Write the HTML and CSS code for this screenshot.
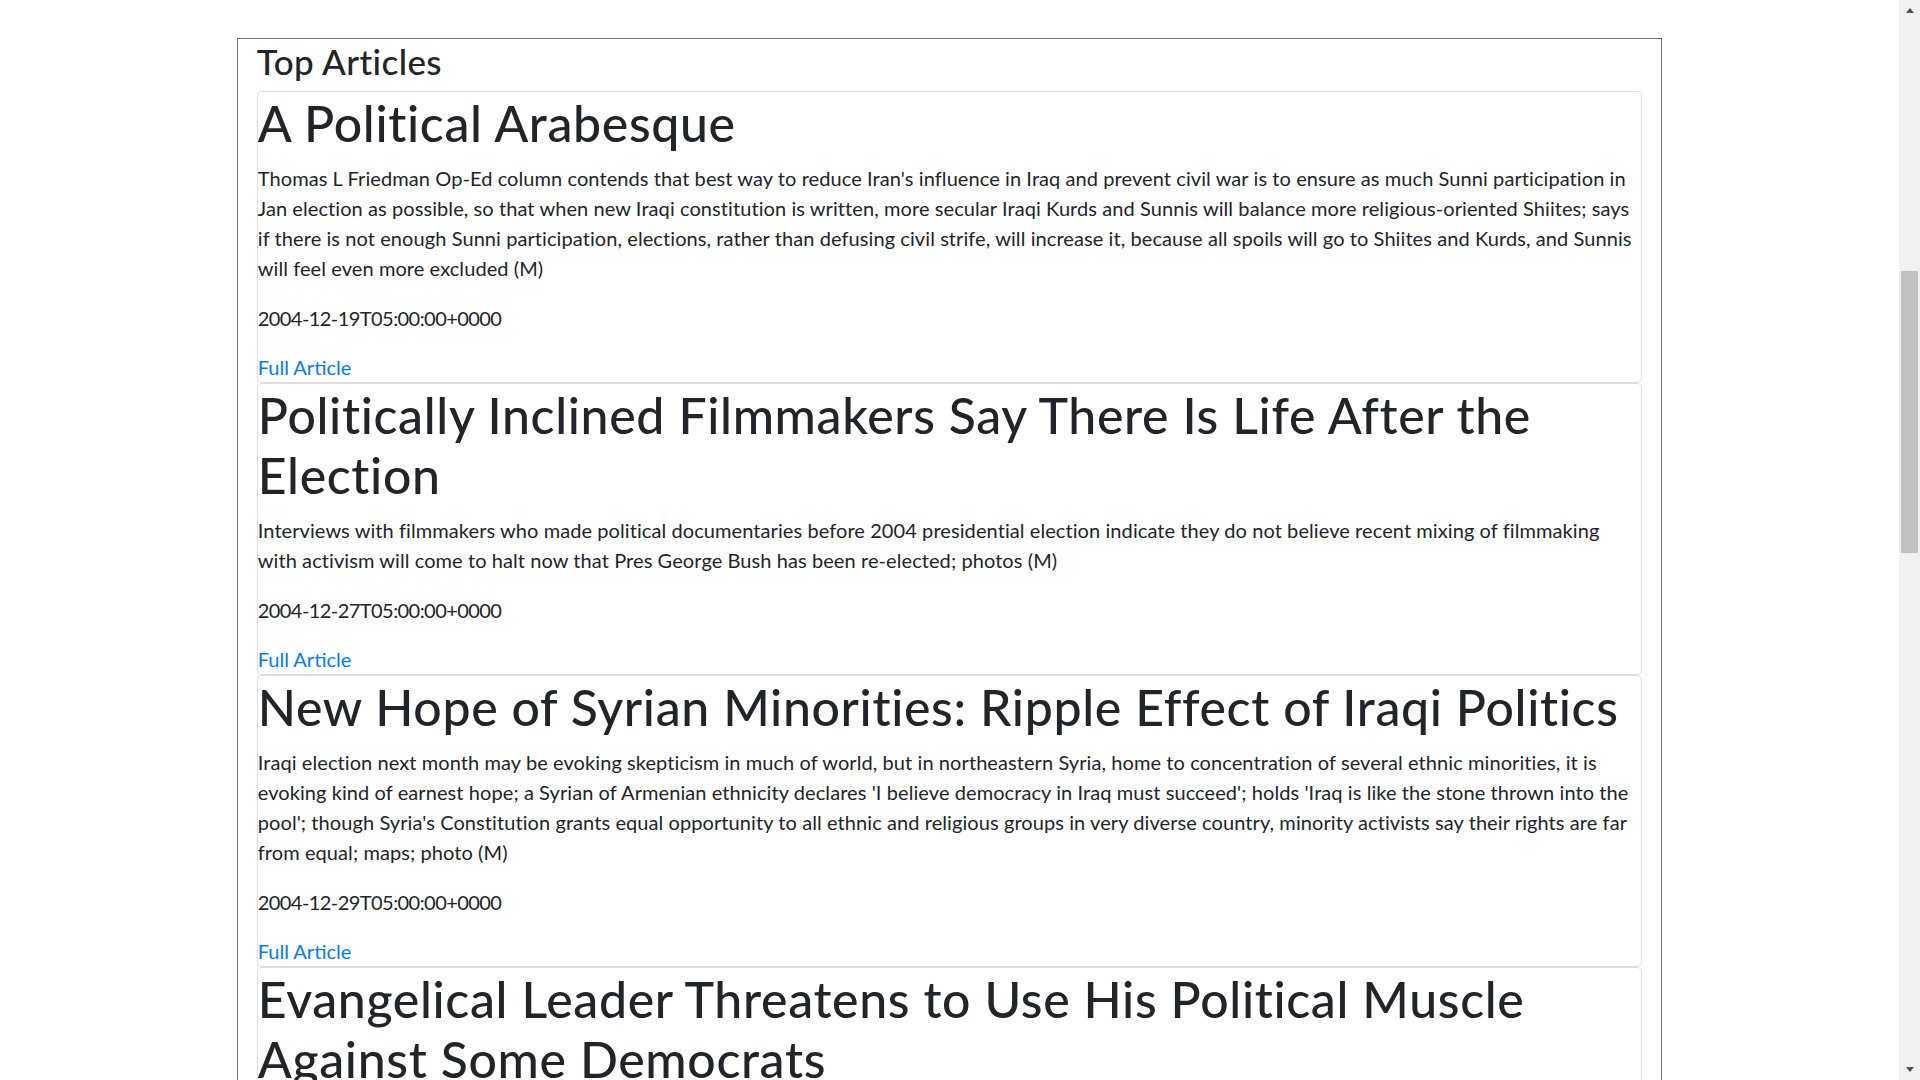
FILE: index.html
```html
<!DOCTYPE html>
<html lang="en">
<head>
<meta charset="utf-8">
<title>Top Articles</title>
<link rel="stylesheet" href="styles.css">
</head>
<body>
<div class="page">
  <div class="container">
    <h3 class="section-title">Top Articles</h3>

    <div class="card">
      <h1 class="card-title">A Political Arabesque</h1>
      <p class="card-text">Thomas L Friedman Op-Ed column contends that best way to reduce Iran's influence in Iraq and prevent civil war is to ensure as much Sunni participation in<br>Jan election as possible, so that when new Iraqi constitution is written, more secular Iraqi Kurds and Sunnis will balance more religious-oriented Shiites; says<br>if there is not enough Sunni participation, elections, rather than defusing civil strife, will increase it, because all spoils will go to Shiites and Kurds, and Sunnis<br>will feel even more excluded (M)</p>
      <p class="card-text card-date">2004-12-19T05:00:00+0000</p>
      <div class="card-action"><a class="card-link" href="#">Full Article</a></div>
    </div>

    <div class="card">
      <h1 class="card-title">Politically Inclined Filmmakers Say There Is Life After the<br>Election</h1>
      <p class="card-text">Interviews with filmmakers who made political documentaries before 2004 presidential election indicate they do not believe recent mixing of filmmaking<br>with activism will come to halt now that Pres George Bush has been re-elected; photos (M)</p>
      <p class="card-text card-date">2004-12-27T05:00:00+0000</p>
      <div class="card-action"><a class="card-link" href="#">Full Article</a></div>
    </div>

    <div class="card">
      <h1 class="card-title">New Hope of Syrian Minorities: Ripple Effect of Iraqi Politics</h1>
      <p class="card-text">Iraqi election next month may be evoking skepticism in much of world, but in northeastern Syria, home to concentration of several ethnic minorities, it is<br>evoking kind of earnest hope; a Syrian of Armenian ethnicity declares 'I believe democracy in Iraq must succeed'; holds 'Iraq is like the stone thrown into the<br>pool'; though Syria's Constitution grants equal opportunity to all ethnic and religious groups in very diverse country, minority activists say their rights are far<br>from equal; maps; photo (M)</p>
      <p class="card-text card-date">2004-12-29T05:00:00+0000</p>
      <div class="card-action"><a class="card-link" href="#">Full Article</a></div>
    </div>

    <div class="card">
      <h1 class="card-title">Evangelical Leader Threatens to Use His Political Muscle<br>Against Some Democrats</h1>
      <div class="card-action"><a class="card-link" href="#">Full Article</a></div>
    </div>
  </div>
</div>
<div class="scrollbar">
  <div class="scroll-btn"><span class="arrow-up"></span></div>
  <div class="scroll-track"><div class="scroll-thumb"></div></div>
  <div class="scroll-btn"><span class="arrow-down"></span></div>
</div>
</body>
</html>
```

FILE: styles.css
```css
html, body {
  margin: 0;
  padding: 0;
  height: 100%;
  overflow: hidden;
}

body {
  display: flex;
  background: #fff;
  color: #212529;
  font-family: "Lato", "Liberation Sans", sans-serif;
  font-size: 20px;
  line-height: 30px;
}

.page {
  flex: 1;
  overflow: hidden;
}

.container {
  box-sizing: border-box;
  width: 1425px;
  margin: 38px auto 0;
  padding: 0 18.75px;
  border: 1px solid #6c757d;
}

.section-title {
  margin: 0 0 9px;
  padding-top: 1px;
  font-size: 35px;
  line-height: 42px;
  font-weight: 500;
  letter-spacing: 0.4px;
}

.card {
  border: 1px solid rgba(0, 0, 0, 0.125);
  border-radius: 5px;
  background: #fff;
}

.card-title {
  margin: 0 0 9px;
  padding-top: 1px;
  font-size: 50px;
  line-height: 60px;
  font-weight: 500;
  letter-spacing: 0.65px;
}

.card-text {
  margin: 0 0 19px;
  padding-top: 1px;
  letter-spacing: 0.08px;
}

.card-date {
  letter-spacing: -0.56px;
}

.card-action {
  padding-top: 1px;
  line-height: 29px;
}

.card-link {
  color: #007bff;
  text-decoration: none;
}

.scrollbar {
  width: 21px;
  flex: none;
  display: flex;
  flex-direction: column;
  background: #f1f1f1;
}

.scroll-btn {
  height: 21px;
  display: flex;
  align-items: center;
  justify-content: center;
}

.arrow-up {
  width: 0;
  height: 0;
  border-left: 4.5px solid transparent;
  border-right: 4.5px solid transparent;
  border-bottom: 5px solid #505050;
}

.arrow-down {
  width: 0;
  height: 0;
  border-left: 4.5px solid transparent;
  border-right: 4.5px solid transparent;
  border-top: 5px solid #505050;
}

.scroll-track {
  flex: 1;
  padding: 0 2px;
}

.scroll-thumb {
  margin-top: 250px;
  height: 282px;
  background: #c1c1c1;
}
```
